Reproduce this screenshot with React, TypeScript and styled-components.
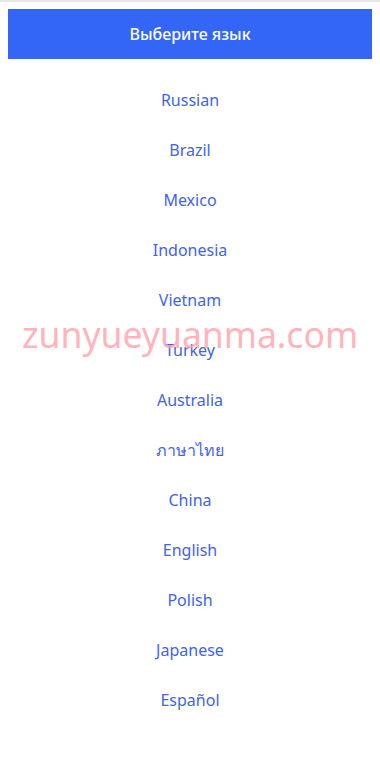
import styled, { createGlobalStyle } from "styled-components";

const languages = [
  "Russian",
  "Brazil",
  "Mexico",
  "Indonesia",
  "Vietnam",
  "Turkey",
  "Australia",
  "ภาษาไทย",
  "China",
  "English",
  "Polish",
  "Japanese",
  "Español",
];

const GlobalStyle = createGlobalStyle`
  body {
    margin: 0;
    background: #ffffff;
    font-family: "Noto Sans", "Open Sans", sans-serif;
  }
`;

const App = () => {
  return (
    <>
      <GlobalStyle />
      <Page>
        <TopLine />
        <Content>
          <Header>Выберите язык</Header>
          <List>
            {languages.map((lang) => (
              <Item key={lang}>{lang}</Item>
            ))}
          </List>
        </Content>
        <Watermark>zunyueyuanma.com</Watermark>
      </Page>
    </>
  );
};

const Page = styled.div`
  position: relative;
  min-height: 781px;
`;

const TopLine = styled.div`
  height: 2px;
  background: #e6e6e6;
`;

const Content = styled.div`
  padding: 7px 8px 0;
`;

const Header = styled.div`
  display: flex;
  align-items: center;
  justify-content: center;
  height: 50px;
  background: #3366f6;
  color: #ffffff;
  font-size: 16px;
  font-weight: 500;
`;

const List = styled.ul`
  list-style: none;
  margin: 0;
  padding: 16px 0 0;
`;

const Item = styled.li`
  height: 50px;
  display: flex;
  align-items: center;
  justify-content: center;
  color: #4262f2;
  font-size: 16px;
  cursor: pointer;
`;

const Watermark = styled.div`
  position: absolute;
  top: 310px;
  left: 0;
  right: 0;
  text-align: center;
  font-size: 35.5px;
  color: rgba(255, 160, 170, 0.8);
  pointer-events: none;
`;

export default App;
